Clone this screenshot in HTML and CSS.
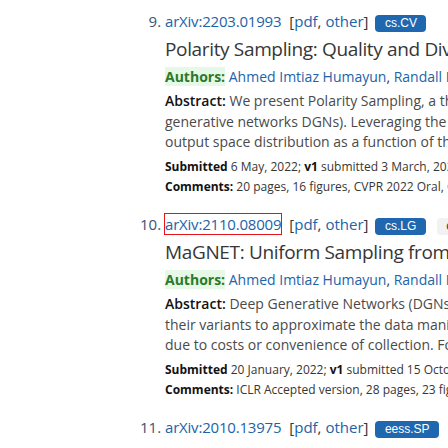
FILE: index.html
```html
<!DOCTYPE html>
<html>
<head>
<meta charset="utf-8">
<link rel="stylesheet" href="styles.css">
</head>
<body>
<ol class="results" start="9">
  <li class="result">
    <p class="list-title"><a class="id" href="#">arXiv:2203.01993</a><span class="links">[<a href="#">pdf</a>, <a href="#">other</a>]</span><span class="tag primary">cs.CV</span></p>
    <p class="title">Polarity Sampling: Quality and Diversity Control of Pre-Trained Generative Networks via Singular Values</p>
    <p class="authors"><span class="label">Authors:</span> <a href="#">Ahmed Imtiaz Humayun</a>, <a href="#">Randall Balestriero</a>, <a href="#">Richard Baraniuk</a></p>
    <p class="abstract">
      <span class="line"><span class="label">Abstract:</span> We present Polarity Sampling, a theoretically justified plug-and-play method for controlling the generation quality and diversity of pre-trained deep</span>
      <span class="line">generative networks DGNs). Leveraging the fact that DGNs are, or can be approximated by, continuous piecewise affine splines, we derive the analytical DGN</span>
      <span class="line">output space distribution as a function of the product of the DGN's Jacobian singular values raised to a power &hellip;</span>
    </p>
    <p class="meta submitted"><b>Submitted</b> 6 May, 2022; <b>v1</b> submitted 3 March, 2022; originally announced March 2022.</p>
    <p class="meta"><b>Comments:</b> 20 pages, 16 figures, CVPR 2022 Oral, Code: https://github.com/AhmedImtiazPrio/polarity-sampling</p>
  </li>
  <li class="result">
    <p class="list-title"><a class="id focused" href="#">arXiv:2110.08009</a><span class="links">[<a href="#">pdf</a>, <a href="#">other</a>]</span><span class="tag primary">cs.LG</span><span class="tag secondary">cs.AI</span></p>
    <p class="title">MaGNET: Uniform Sampling from Deep Generative Network Manifolds Without Retraining</p>
    <p class="authors"><span class="label">Authors:</span> <a href="#">Ahmed Imtiaz Humayun</a>, <a href="#">Randall Balestriero</a>, <a href="#">Richard Baraniuk</a></p>
    <p class="abstract">
      <span class="line"><span class="label">Abstract:</span> Deep Generative Networks (DGNs) are extensively employed in Generative Adversarial Networks (GANs), Variational Autoencoders (VAEs), and</span>
      <span class="line">their variants to approximate the data manifold, and data distribution on that manifold. However, training samples are often obtained based on preferences,</span>
      <span class="line">due to costs or convenience of collection. For example, &hellip;</span>
    </p>
    <p class="meta submitted"><b>Submitted</b> 20 January, 2022; <b>v1</b> submitted 15 October, 2021; originally announced October 2021.</p>
    <p class="meta"><b>Comments:</b> ICLR Accepted version, 28 pages, 23 figures</p>
  </li>
  <li class="result">
    <p class="list-title"><a class="id" href="#">arXiv:2010.13975</a><span class="links">[<a href="#">pdf</a>, <a href="#">other</a>]</span><span class="tag primary">eess.SP</span></p>
    <p class="title">Deep Autoencoders: From Understanding to Generalization Guarantees</p>
  </li>
</ol>
</body>
</html>
```
FILE: styles.css
```css
html, body {
  margin: 0;
  padding: 0;
  background: #ffffff;
}
body {
  width: 448px;
  height: 448px;
  overflow: hidden;
  font-family: "Open Sans", "Noto Sans", sans-serif;
  color: #363636;
}
a {
  color: #2063a8;
  text-decoration: none;
}
.results {
  margin: 0;
  padding: 10px 0 0 165px;
  list-style: decimal;
}
.result {
  font-size: 15px;
  white-space: nowrap;
  margin-bottom: 16px;
}
.result::marker {
  color: #3a5475;
}
.result p {
  margin: 0;
}
.list-title {
  line-height: 22px;
}
.id {
  letter-spacing: -0.2px;
}
.id.focused {
  outline: 1px solid #e8141c;
}
.links {
  margin-left: 8px;
  color: #363636;
}
.tag {
  display: inline-block;
  font-family: "Liberation Sans", Arial, sans-serif;
  font-size: 12px;
  line-height: 17px;
  padding: 0 9.5px;
  border-radius: 4px;
  margin-left: 7px;
}
.tag.primary {
  background: #1f68b0;
  color: #ffffff;
}
.tag.secondary {
  background: #f2f2f2;
  color: #363636;
  margin-left: 11px;
}
.result .title {
  font-size: 19px;
  letter-spacing: -0.35px;
  line-height: 26px;
  margin-top: 4px;
  color: #363636;
}
.result .authors {
  font-size: 14px;
  line-height: 20px;
  margin-top: 5px;
}
.authors .label {
  font-weight: 700;
  color: #2b7a2b;
  background: #e6f8e6;
}
.result .abstract {
  font-size: 14px;
  line-height: 20.5px;
  margin-top: 4px;
  color: #4a4a4a;
}
.abstract .line {
  display: block;
}
.abstract .label {
  font-weight: 600;
  color: #121212;
}
.result .meta {
  font-size: 12px;
  line-height: 20px;
  color: #363636;
}
.result .submitted {
  margin-top: 4.5px;
}
.meta b {
  font-weight: 700;
  color: #121212;
}
```
